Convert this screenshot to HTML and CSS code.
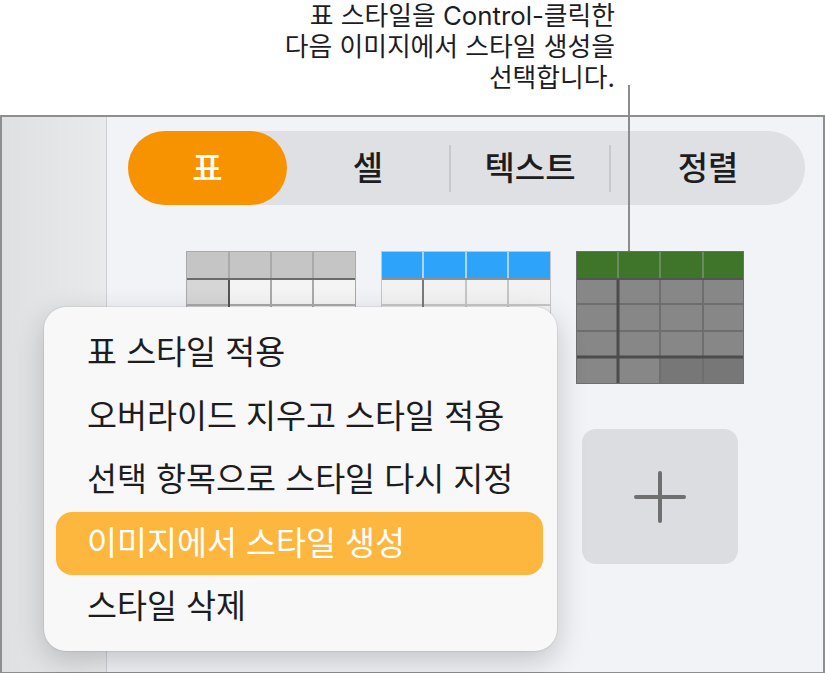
FILE: index.html
```html
<!DOCTYPE html>
<html lang="ko">

<head>
    <meta charset="UTF-8">
    <meta name="viewport" content="width=device-width, initial-scale=1.0">
    <title>표 스타일</title>
    <link rel="stylesheet" href="styles.css">
</head>

<body>

    <p class="caption">표 스타일을 Control-클릭한<br>다음 이미지에서 스타일 생성을<br>선택합니다.</p>
    <div class="leader"></div>

    <div class="window">
        <div class="sidebar"></div>

        <div class="panel">
            <div class="tabs">
                <div class="tab active">표</div>
                <div class="tab cell">셀</div>
                <span class="sep"></span>
                <div class="tab text">텍스트</div>
                <span class="sep"></span>
                <div class="tab align">정렬</div>
            </div>

            <div class="styles">
                <svg class="thumb" viewBox="0 0 170 133" width="170" height="133">
                    <rect width="170" height="27" fill="#c4c5c4" />
                    <rect y="29" width="170" height="104" fill="#f4f4f4" />
                    <rect y="29" width="43" height="104" fill="#d6d6d6" />
                    <path d="M43 0V27M85 0V27M127 0V27" stroke="#a9aaa9" stroke-width="2" />
                    <rect y="27" width="170" height="2" fill="#6b6b6b" />
                    <path d="M85 29V133M127 29V133M0 54H170M0 80H170M0 106H170" stroke="#a9a9a9" stroke-width="2" />
                    <path d="M43 29V133" stroke="#555" stroke-width="2" />
                    <rect x="0.5" y="0.5" width="169" height="132" fill="none" stroke="#a9a9a9" />
                </svg>

                <svg class="thumb" viewBox="0 0 170 133" width="170" height="133">
                    <rect width="170" height="27" fill="#2ea3fa" />
                    <rect y="29" width="170" height="104" fill="#f2f2f2" />
                    <path d="M42 0V27M85 0V27M127 0V27" stroke="#a8d8ff" stroke-width="2" />
                    <rect y="27" width="170" height="2" fill="#8e8e8e" />
                    <path d="M85 29V133M127 29V133M0 54H170M0 80H170M0 106H170" stroke="#c6c6c6" stroke-width="2" />
                    <path d="M42 29V133" stroke="#7a7a7a" stroke-width="2" />
                    <rect x="0.5" y="0.5" width="169" height="132" fill="none" stroke="#c6c6c6" />
                </svg>

                <svg class="thumb" viewBox="0 0 170 133" width="170" height="133">
                    <rect width="168" height="27" fill="#3e7529" />
                    <rect y="29" width="168" height="104" fill="#878787" />
                    <rect x="85" y="107" width="83" height="26" fill="#777" />
                    <path d="M42 0V27M84 0V27M127 0V27" stroke="#6b8a60" stroke-width="2" />
                    <rect y="27" width="168" height="2" fill="#555" />
                    <path d="M84 29V133M127 29V133M0 53H168M0 80H168" stroke="#6e6e6e" stroke-width="2" />
                    <path d="M42 29V133M0 106H168" stroke="#4c4c4c" stroke-width="3" />
                    <rect x="0.5" y="0.5" width="167" height="132" fill="none" stroke="#6e6e6e" />
                </svg>

                <div class="add">
                    <svg viewBox="0 0 52 52" width="52" height="52">
                        <path d="M26 2V50M2 26H50" stroke="#6f6f6f" stroke-width="4" stroke-linecap="round" />
                    </svg>
                </div>
            </div>
        </div>
    </div>

    <ul class="menu">
        <li>표 스타일 적용</li>
        <li>오버라이드 지우고 스타일 적용</li>
        <li>선택 항목으로 스타일 다시 지정</li>
        <li class="selected">이미지에서 스타일 생성</li>
        <li>스타일 삭제</li>
    </ul>

</body>

</html>
```

FILE: styles.css
```css
body {
    margin: 0;
    height: 673px;
    overflow: hidden;
    background-color: #fff;
    font-family: Inter, "Noto Sans CJK KR", sans-serif;
    color: #1d1d1f;
}

.caption {
    margin: 0;
    height: 115px;
    padding-right: 210px;
    text-align: right;
    font-size: 25.8px;
    line-height: 31px;
}

.leader {
    position: absolute;
    left: 628px;
    top: 85px;
    width: 2px;
    height: 166px;
    background-color: #8c8c8c;
    z-index: 2;
}

.window {
    display: flex;
    height: 558px;
    box-sizing: border-box;
    border: 2px solid #8e8e8e;
    border-bottom-width: 1px;
}

.sidebar {
    width: 104px;
    background: linear-gradient(to right, #dfe0e2, #e9eaec);
    border-right: 1px solid #cfd0d3;
}

.panel {
    flex: 1;
    background-color: #f2f3f6;
    padding: 14px 18px 0 21px;
}

.tabs {
    display: flex;
    align-items: center;
    height: 74px;
    border-radius: 37px;
    background-color: #dfe0e3;
}

.tab {
    height: 74px;
    line-height: 74px;
    text-align: center;
    font-size: 33px;
    font-weight: 500;
}

.tab.active {
    width: 159px;
    border-radius: 37px;
    background-color: #f79300;
    color: #fff;
}

.tab.cell {
    width: 162px;
}

.tab.text {
    width: 158px;
}

.tab.align {
    flex: 1;
}

.sep {
    width: 2px;
    height: 47px;
    background-color: #c8c9cc;
}

.styles {
    display: grid;
    grid-template-columns: repeat(3, 170px);
    column-gap: 25px;
    row-gap: 45px;
    margin-top: 46px;
    padding-left: 58px;
}

.thumb {
    display: block;
}

.add {
    grid-column: 3;
    display: flex;
    align-items: center;
    justify-content: center;
    width: 156px;
    height: 135px;
    margin-left: 6px;
    border-radius: 14px;
    background-color: #dcdde0;
}

.menu {
    position: absolute;
    left: 44px;
    top: 307px;
    width: 513px;
    margin: 0;
    padding: 14px 0 12px;
    box-sizing: border-box;
    list-style: none;
    border-radius: 22px;
    background-color: #f8f8f9;
    box-shadow: 0 0 0 1px rgba(0, 0, 0, 0.06), 0 10px 30px rgba(0, 0, 0, 0.2);
    z-index: 3;
}

.menu li {
    height: 63.5px;
    line-height: 63.5px;
    margin: 0 14px 0 12px;
    padding-left: 31px;
    border-radius: 16px;
    font-size: 32.6px;
}

.menu li.selected {
    background-color: #fdb63e;
    color: #fff;
}
```
